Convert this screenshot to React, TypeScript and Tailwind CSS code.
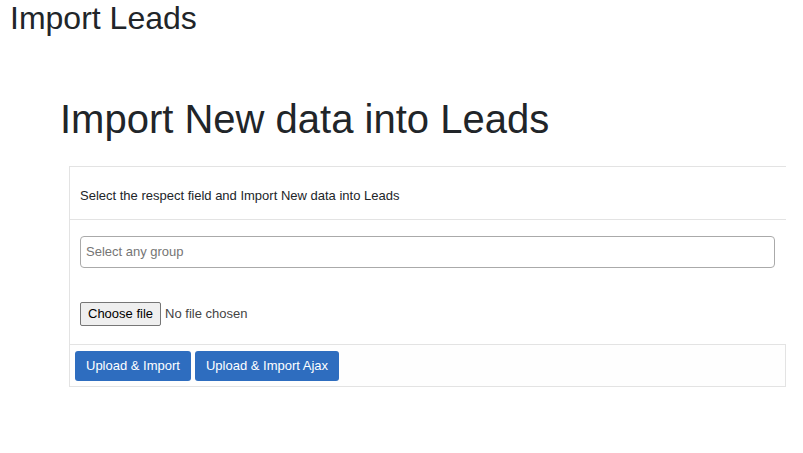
import React from "react";

export default function App(): React.JSX.Element {
  return (
    <div className="w-[803px] h-[453px] bg-white text-[#212529] font-['Liberation_Sans',Arial,sans-serif] overflow-hidden">
      <h1 className="text-[32px] leading-[36px] pl-[10px] font-normal">Import Leads</h1>
      <div className="pl-[60px] pt-[59px]">
        <h2 className="text-[40px] leading-[48px] font-normal">Import New data into Leads</h2>
      </div>
      <div className="ml-[69px] mt-[23px] w-[717px] border-l border-t border-[#e3e3e3]">
        <div className="h-[53px] flex items-center px-[10px] border-b border-[#e3e3e3] text-[13px] pt-[6px]">
          Select the respect field and Import New data into Leads
        </div>
        <div className="px-[10px] pt-[16px] pb-[18px]">
          <div className="w-[695px] h-[32px] border border-[#aaa] rounded-[4px] flex items-center px-[5px] text-[13px] text-[#757575]">
            Select any group
          </div>
          <div className="mt-[34px] flex items-center gap-[4px] text-[13px]">
            <button className="h-[24px] px-[7px] border border-[#767676] rounded-[2px] bg-[#efefef] text-black">
              Choose file
            </button>
            <span className="text-[#444]">No file chosen</span>
          </div>
        </div>
        <div className="-ml-px border border-[#e3e3e3] bg-[#fefefe] h-[43px] flex items-center gap-[4px] px-[5px] text-[13px]">
          <button className="h-[30px] px-[11px] rounded-[3px] bg-[#2e6dbf] text-white">Upload &amp; Import</button>
          <button className="h-[30px] px-[11px] rounded-[3px] bg-[#2e6dbf] text-white">Upload &amp; Import Ajax</button>
        </div>
      </div>
    </div>
  );
}
